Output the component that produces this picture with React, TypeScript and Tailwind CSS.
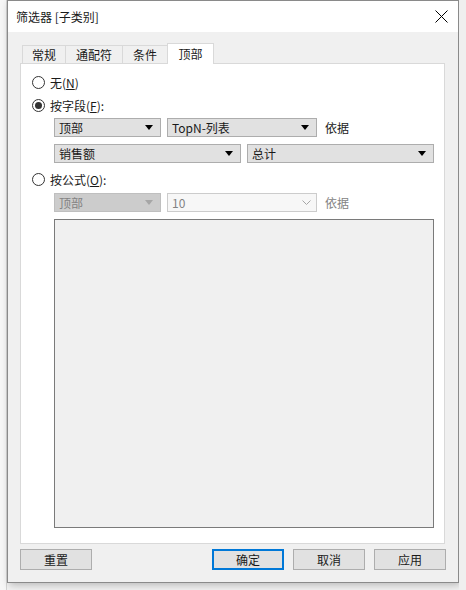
import React from "react";

const font = { fontFamily: '"Noto Sans CJK SC", "Microsoft YaHei", sans-serif' };

function Arrow({ disabled = false }: { disabled?: boolean }) {
  return (
    <svg width="8" height="5" viewBox="0 0 8 5" className="shrink-0">
      <path d="M0 0 L8 0 L4 5 Z" fill={disabled ? "#a6a6a6" : "#000"} />
    </svg>
  );
}

function Select({ label, w, disabled = false }: { label: string; w: string; disabled?: boolean }) {
  return (
    <div
      className={`${w} h-[19px] flex items-center justify-between pl-[4px] pr-[7px] border ${
        disabled ? "bg-[#cccccc] border-[#bfbfbf] text-[#838383]" : "bg-[#e1e1e1] border-[#adadad] text-[#1a1a1a]"
      }`}
    >
      <span className="leading-none">{label}</span>
      <Arrow disabled={disabled} />
    </div>
  );
}

function Radio({ checked = false, children }: { checked?: boolean; children: React.ReactNode }) {
  return (
    <div className="h-[13px] flex items-center gap-[5px]">
      <div className="w-[13px] h-[13px] rounded-full border border-[#333333] bg-white flex items-center justify-center">
        {checked && <div className="w-[7px] h-[7px] rounded-full bg-[#333333]" />}
      </div>
      <span className="leading-none">{children}</span>
    </div>
  );
}

function Btn({ label, primary = false }: { label: string; primary?: boolean }) {
  return (
    <div
      className={`w-[72px] h-[21px] flex items-center justify-center bg-[#e1e1e1] ${
        primary ? "border-2 border-[#0078d7]" : "border border-[#adadad]"
      }`}
    >
      {label}
    </div>
  );
}

export default function App() {
  const tabs = [
    { t: "常规", w: "w-[44px]" },
    { t: "通配符", w: "w-[58px]" },
    { t: "条件", w: "w-[46px]" },
  ];
  return (
    <div className="w-[466px] h-[590px] bg-[#f3f3f3] text-[12px] text-[#1a1a1a] overflow-hidden flex" style={font}>
      <div className="w-[7px] h-full bg-[#f7f7f7] border-r border-[#d4d4d4]" />
      <div className="w-[452px] h-[583px] border border-[#8a8a8a] bg-[#f0f0f0] flex flex-col shadow-[2px_2px_8px_rgba(0,0,0,0.25)]">
        <div className="h-[31px] bg-white flex items-center justify-between pl-[8px] pr-[10px]">
          <span className="text-[12px] pt-[1px]">筛选器 [子类别]</span>
          <svg width="13" height="13" viewBox="0 0 13 13">
            <path d="M0.5 0.5 L12.5 12.5 M12.5 0.5 L0.5 12.5" stroke="#000" strokeWidth="1" />
          </svg>
        </div>
        <div className="flex-1 flex flex-col pl-[12px] pr-[12px] pt-[11px]">
          <div className="flex items-end h-[20px] pl-[2px]">
            {tabs.map((tab) => (
              <div
                key={tab.t}
                className={`${tab.w} h-[18px] border border-b-0 border-[#d9d9d9] -mr-px bg-[#f0f0f0] flex items-center justify-center`}
              >
                {tab.t}
              </div>
            ))}
            <div className="w-[47px] h-[21px] border border-b-0 border-[#d9d9d9] bg-white flex items-center justify-center relative z-10 -mb-px">
              顶部
            </div>
          </div>
          <div className="w-[425px] h-[481px] bg-white border border-[#d9d9d9] flex flex-col pl-[11px] pt-[12px]">
            <Radio>
              无(<span className="underline">N</span>)
            </Radio>
            <div className="mt-[10px]">
              <Radio checked>
                按字段(<span className="underline">F</span>):
              </Radio>
            </div>
            <div className="mt-[6px] ml-[22px] flex flex-col gap-[7px]">
              <div className="flex items-center">
                <Select label="顶部" w="w-[107px]" />
                <div className="w-[6px]" />
                <Select label="TopN-列表" w="w-[150px]" />
                <span className="ml-[8px]">依据</span>
              </div>
              <div className="flex items-center">
                <Select label="销售额" w="w-[187px]" />
                <div className="w-[6px]" />
                <Select label="总计" w="w-[187px]" />
              </div>
            </div>
            <div className="mt-[10px]">
              <Radio>
                按公式(<span className="underline">O</span>):
              </Radio>
            </div>
            <div className="mt-[7px] ml-[22px] flex items-center">
              <Select label="顶部" w="w-[107px]" disabled />
              <div className="w-[6px]" />
              <div className="w-[150px] h-[19px] flex items-center justify-between pl-[4px] pr-[5px] border border-[#cccccc] bg-[#f7f7f7] text-[#838383]">
                <span className="leading-none">10</span>
                <svg width="9" height="5" viewBox="0 0 9 5">
                  <path d="M0.5 0.5 L4.5 4.5 L8.5 0.5" stroke="#a6a6a6" fill="none" strokeWidth="1" />
                </svg>
              </div>
              <span className="ml-[8px] text-[#838383]">依据</span>
            </div>
            <div className="mt-[7px] ml-[22px] w-[380px] h-[309px] bg-[#f0f0f0] border border-[#7a7a7a]" />
          </div>
          <div className="mt-[5px] flex items-center">
            <Btn label="重置" />
            <div className="flex-1" />
            <div className="flex gap-[9px]">
              <Btn label="确定" primary />
              <Btn label="取消" />
              <Btn label="应用" />
            </div>
          </div>
        </div>
      </div>
      <div className="flex-1 h-full bg-[#efefef]" />
    </div>
  );
}
